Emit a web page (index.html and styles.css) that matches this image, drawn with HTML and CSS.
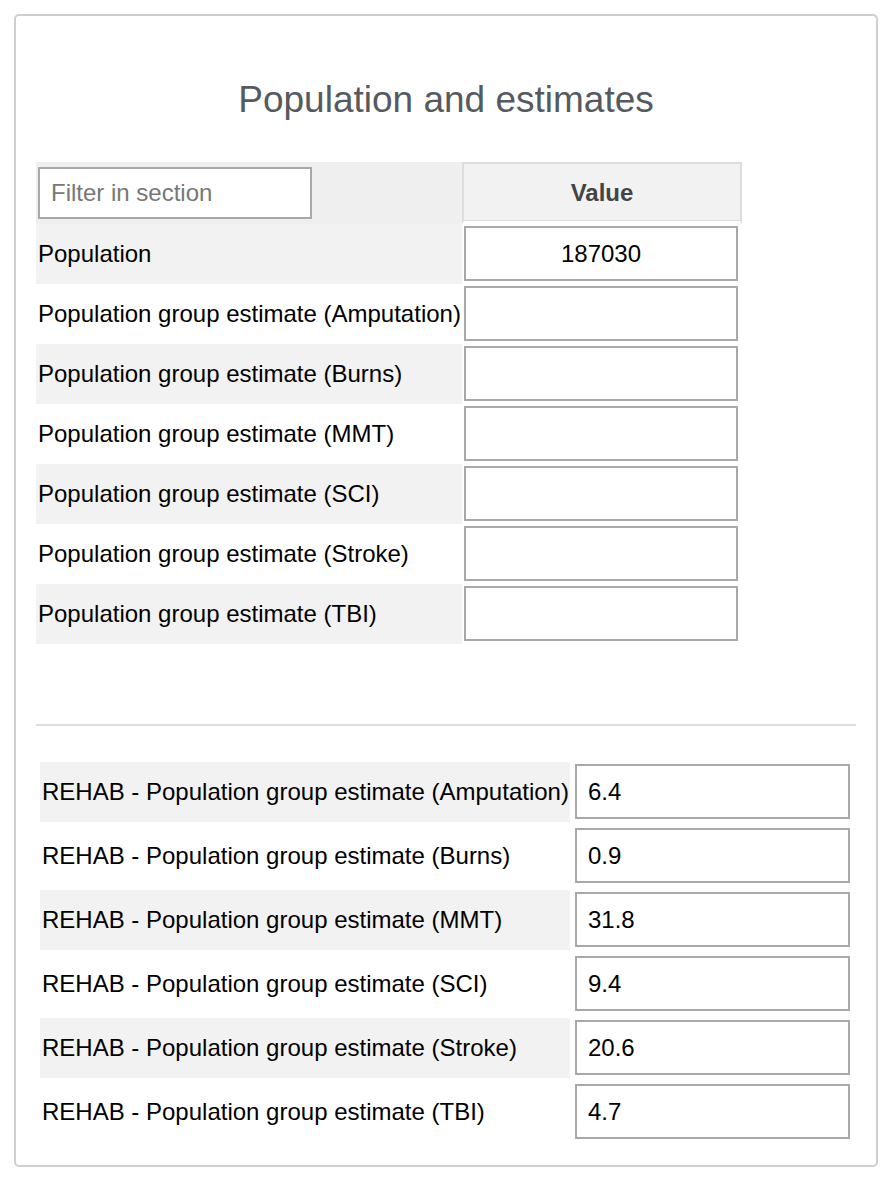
FILE: index.html
```html
<!DOCTYPE html>
<html lang="en">
<head>
<meta charset="utf-8">
<title>Population and estimates</title>
<link rel="stylesheet" href="styles.css">
</head>
<body>
<section class="card">
  <h2 class="title">Population and estimates</h2>
  <table class="grid main">
    <thead>
      <tr>
        <th class="filter-cell"><input class="filter" type="text" placeholder="Filter in section"></th>
        <th class="value-head">Value</th>
      </tr>
    </thead>
    <tbody>
      <tr class="shade"><td class="label">Population</td><td class="val"><input class="box center" type="text" value="187030"></td></tr>
      <tr><td class="label">Population group estimate (Amputation)</td><td class="val"><input class="box center" type="text"></td></tr>
      <tr class="shade"><td class="label">Population group estimate (Burns)</td><td class="val"><input class="box center" type="text"></td></tr>
      <tr><td class="label">Population group estimate (MMT)</td><td class="val"><input class="box center" type="text"></td></tr>
      <tr class="shade"><td class="label">Population group estimate (SCI)</td><td class="val"><input class="box center" type="text"></td></tr>
      <tr><td class="label">Population group estimate (Stroke)</td><td class="val"><input class="box center" type="text"></td></tr>
      <tr class="shade"><td class="label">Population group estimate (TBI)</td><td class="val"><input class="box center" type="text"></td></tr>
    </tbody>
  </table>
  <hr class="divider">
  <table class="grid rehab">
    <tbody>
      <tr class="shade"><td class="label">REHAB - Population group estimate (Amputation)</td><td class="val"><input class="box" type="text" value="6.4"></td></tr>
      <tr><td class="label">REHAB - Population group estimate (Burns)</td><td class="val"><input class="box" type="text" value="0.9"></td></tr>
      <tr class="shade"><td class="label">REHAB - Population group estimate (MMT)</td><td class="val"><input class="box" type="text" value="31.8"></td></tr>
      <tr><td class="label">REHAB - Population group estimate (SCI)</td><td class="val"><input class="box" type="text" value="9.4"></td></tr>
      <tr class="shade"><td class="label">REHAB - Population group estimate (Stroke)</td><td class="val"><input class="box" type="text" value="20.6"></td></tr>
      <tr><td class="label">REHAB - Population group estimate (TBI)</td><td class="val"><input class="box" type="text" value="4.7"></td></tr>
    </tbody>
  </table>
</section>
</body>
</html>
```

FILE: styles.css
```css
html, body {
  margin: 0;
  padding: 0;
  background: #fff;
}

body {
  font-family: "Liberation Sans", Arial, sans-serif;
  font-size: 24px;
  color: #000;
}

.card {
  box-sizing: border-box;
  width: 864px;
  height: 1153px;
  margin: 14px;
  border: 2px solid #cfcfcf;
  border-radius: 5px;
  padding: 0 20px 20px;
}

.title {
  margin: 62px 0 41px;
  font-size: 37px;
  font-weight: normal;
  line-height: 43px;
  text-align: center;
  color: #555a60;
}

.grid {
  border-collapse: separate;
  font-size: 24px;
}

.main {
  border-spacing: 0;
}

.rehab {
  width: 820px;
  border-spacing: 4px;
}

.grid td,
.grid th {
  padding: 0;
}

.filter-cell {
  box-sizing: border-box;
  width: 426px;
  height: 62px;
  background: #efefef;
  text-align: left;
  vertical-align: middle;
  padding: 0 2px !important;
}

.filter {
  box-sizing: border-box;
  display: block;
  width: 274px;
  height: 52px;
  margin: 0;
  border: 2px solid #a9a9a9;
  padding: 0 11px;
  font: 24px "Liberation Sans", Arial, sans-serif;
  color: #000;
  background: #fff;
  outline: none;
}

.filter::placeholder {
  color: #777;
}

.value-head {
  box-sizing: border-box;
  width: 280px;
  height: 62px;
  border: 2px solid #dddddd;
  border-bottom-width: 3px;
  border-bottom-color: #fff;
  box-shadow: inset 0 -1px 0 #dddddd;
  background: #f2f2f2;
  font-weight: bold;
  color: #444;
  text-align: center;
  vertical-align: middle;
}

.main .label {
  box-sizing: border-box;
  width: 426px;
}

.label {
  height: 60px;
  padding: 0 1px 0 2px !important;
  vertical-align: middle;
  white-space: nowrap;
  line-height: 28px;
}

.rehab .label {
  width: 527px;
}

.shade .label {
  background: #f2f2f2;
}

.val {
  vertical-align: top;
  padding: 2px 2px 0 !important;
}

.rehab .val {
  padding: 2px 0 0 1px !important;
}

.box {
  box-sizing: border-box;
  display: block;
  width: 274px;
  height: 55px;
  border: 2px solid #a9a9a9;
  padding: 0 11px;
  font: 24px "Liberation Sans", Arial, sans-serif;
  color: #000;
  background: #fff;
  outline: none;
}

.rehab .box {
  width: 275px;
}

.center {
  text-align: center;
}

.divider {
  height: 2px;
  border: 0;
  background: #dddddd;
  margin: 80px 0 32px;
}
```
